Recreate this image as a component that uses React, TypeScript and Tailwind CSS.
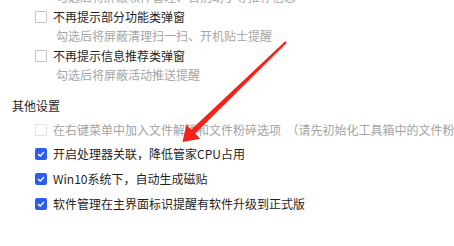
import React from 'react';

const font = { fontFamily: '"Noto Sans CJK SC", "Microsoft YaHei", sans-serif' };

const Box: React.FC<{ checked?: boolean; disabled?: boolean }> = ({ checked, disabled }) => {
  if (checked) {
    return (
      <span className="flex h-[12px] w-[12px] shrink-0 items-center justify-center rounded-[2px] bg-[#2c5cf0]">
        <svg width="8" height="6" viewBox="0 0 8 6" fill="none">
          <path d="M1 3 L3.2 5 L7 1" stroke="#fff" strokeWidth="1.3" />
        </svg>
      </span>
    );
  }
  return (
    <span
      className={`h-[12px] w-[12px] shrink-0 rounded-[1px] border bg-white ${
        disabled ? 'border-[#e2e2e2]' : 'border-[#c4c4c4]'
      }`}
    />
  );
};

const Option: React.FC<{ label: string; checked?: boolean; disabled?: boolean }> = ({
  label,
  checked,
  disabled,
}) => (
  <div className="flex h-[20px] items-center gap-[6px] whitespace-nowrap pl-[35px]">
    <Box checked={checked} disabled={disabled} />
    <span className={`text-[12px] leading-[20px] ${disabled ? 'text-[#a3a3a3]' : 'text-[#1f1f1f]'}`}>{label}</span>
  </div>
);

const Hint: React.FC<{ text: string }> = ({ text }) => (
  <div className="h-[19.5px] whitespace-nowrap pl-[56px] text-[12px] leading-[19.5px] text-[#a6a6a6]">{text}</div>
);

const App: React.FC = () => {
  return (
    <div className="relative h-[246px] w-[454px] overflow-hidden bg-white" style={font}>
      <div className="-mt-[13px]">
        <Hint text="勾选后将屏蔽软件管理、告别助手等推荐信息" />
        <div className="h-[19.5px]">
          <Option label="不再提示部分功能类弹窗" />
        </div>
        <Hint text="勾选后将屏蔽清理扫一扫、开机贴士提醒" />
        <div className="h-[19.5px]">
          <Option label="不再提示信息推荐类弹窗" />
        </div>
        <Hint text="勾选后将屏蔽活动推送提醒" />

        <div className="mt-[11.5px] h-[20px] pl-[12px] text-[12px] leading-[20px] text-[#1f1f1f]">其他设置</div>

        <div className="mt-[3.5px] flex flex-col gap-[4.7px]">
          <Option disabled label={'在右键菜单中加入文件解锁和文件粉碎选项\u00a0\u00a0（请先初始化工具箱中的文件粉碎）'} />
          <Option checked label="开启处理器关联，降低管家CPU占用" />
          <Option checked label="Win10系统下，自动生成磁贴" />
          <Option checked label="软件管理在主界面标识提醒有软件升级到正式版" />
        </div>
      </div>

      <svg className="pointer-events-none absolute left-0 top-0" width="454" height="246">
        <polygon
          fill="#f5221a"
          points="182.5,142 200.2,138.8 195.3,133.6 286.8,42.8 285.2,41.2 191.3,129.6 186.3,124.4"
        />
      </svg>
    </div>
  );
};

export default App;
